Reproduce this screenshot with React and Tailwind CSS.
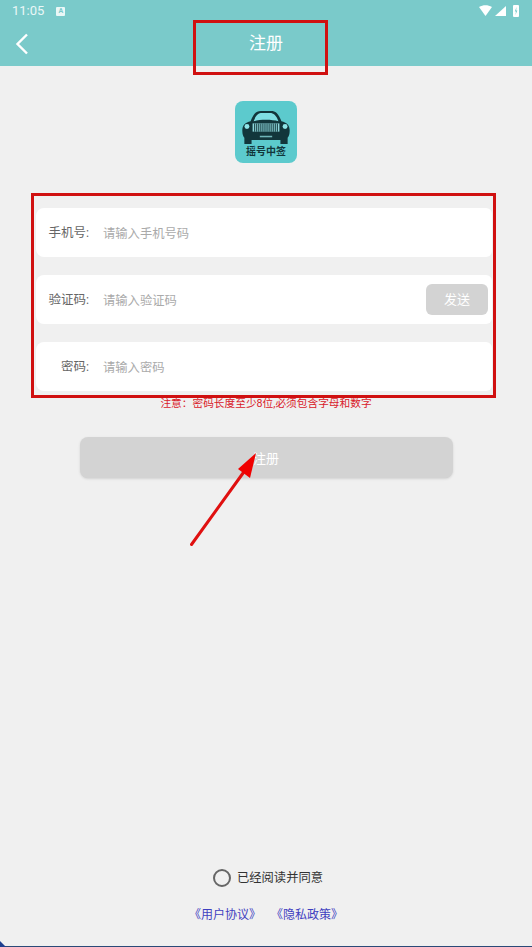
import React from 'react';

const cjk = "font-['Roboto','Noto_Sans_CJK_SC',sans-serif]";

const Row = ({ label, placeholder, children }) => (
    <div className="flex h-[49px] items-center rounded-l-lg rounded-r-md bg-white pr-1">
        <span className="mt-[2px] w-[53px] text-right text-[12.5px] text-[#666666]">{label}</span>
        <span className="mt-[3px] ml-[14px] flex-1 text-[12.3px] text-[#aaaaaa]">{placeholder}</span>
        {children}
    </div>
);

const Logo = () => (
    <div className="flex h-[62px] w-[62px] flex-col items-center rounded-lg bg-[#5ccacd] pt-[9px]">
        <svg width="50" height="34" viewBox="0 0 48 33">
            <path d="M9 11 C12 3 15 1 19 1 H29 C33 1 36 3 39 11 C44 12 47 15 47 20 C47 24 46 26 45 27 V33 H38 V29 H10 V33 H3 V27 C2 26 1 24 1 20 C1 15 4 12 9 11 Z" fill="#12363b" />
            <path d="M12 11 C14 5 17 3 20 3 H28 C31 3 34 5 36 11 C30 9 18 9 12 11 Z" fill="#7fdfe3" />
            <circle cx="5.5" cy="16" r="2.4" fill="#8fe5e8" />
            <circle cx="42.5" cy="16" r="2.4" fill="#8fe5e8" />
            <rect x="11" y="13" width="26" height="8" fill="#8fd8dc" />
            <path d="M13 13 V21 M15 13 V21 M17 13 V21 M19 13 V21 M21 13 V21 M23 13 V21 M25 13 V21 M27 13 V21 M29 13 V21 M31 13 V21 M33 13 V21 M35 13 V21" stroke="#12363b" strokeWidth="1" />
            <rect x="18" y="25" width="12" height="1.5" fill="#6fb5b8" />
        </svg>
        <span className="mt-[1px] text-[10px] leading-[14px] font-bold text-[#12363b]">摇号中签</span>
    </div>
);

const App = () => {
    return (
        <div className={`relative flex h-[947px] w-[532px] flex-col overflow-hidden bg-[#f0f0f0] ${cjk}`}>
            <header className="h-[66px] bg-[#7acaca] text-white">
                <div className="flex h-[22px] items-center pr-[13px] pl-3">
                    <span className="text-[13px] text-[#eaf7f7]">11:05</span>
                    <span className="ml-[12px] flex h-[9px] w-[9px] items-center justify-center rounded-[1px] bg-[#eaf7f7] text-[7px] leading-none font-bold text-[#7acaca]">A</span>
                    <svg className="ml-auto" width="40" height="14" viewBox="0 0 40 14">
                        <path d="M0 3 C4 0.5 9 0.5 13 3 L6.5 12 Z" fill="#ffffff" />
                        <path d="M27 2 V12 H16 Z" fill="#ffffff" />
                        <rect x="34" y="1" width="6" height="12" rx="1" fill="#ffffff" />
                        <path d="M37.5 3 L35.8 7.5 H37 L36.4 11 L38.4 6.5 H37.2 Z" fill="#7acaca" />
                    </svg>
                </div>
                <div className="relative flex h-[44px] items-center justify-center">
                    <svg className="absolute top-[11px] left-[15px]" width="14" height="22" viewBox="0 0 14 22" fill="none">
                        <path d="M12 1.5 L2.5 11 L12 20.5" stroke="#ffffff" strokeWidth="2.4" />
                    </svg>
                    <span className="text-[17px]">注册</span>
                </div>
            </header>

            <div className="mt-[35px] flex justify-center">
                <Logo />
            </div>

            <div className="mt-[45px] ml-[36px] flex w-[456px] flex-col gap-[18px]">
                <Row label="手机号:" placeholder="请输入手机号码" />
                <Row label="验证码:" placeholder="请输入验证码">
                    <span className="flex h-[31px] w-[62px] items-center justify-center rounded-md bg-[#d3d3d3] pt-[1px] text-[13px] text-white">发送</span>
                </Row>
                <Row label="密码:" placeholder="请输入密码" />
            </div>

            <p className="mt-[5px] text-center text-[10.7px] leading-[15px] text-[#d9202a]">{'注意\uFF1A密码长度至少8位,必须包含字母和数字'}</p>

            <button className="mx-auto mt-[26px] flex h-[41px] w-[373px] items-center justify-center rounded-lg bg-[#d3d3d3] pt-[2px] text-[13px] text-white shadow-sm">
                注册
            </button>

            <div className="mt-auto flex items-center justify-center gap-[6px] pl-[4px]">
                <span className="h-[18px] w-[18px] rounded-full border-2 border-[#666666]" />
                <span className="text-[12.3px] text-[#333333]">已经阅读并同意</span>
            </div>
            <div className="mt-[20px] mb-[23px] flex justify-center gap-[10px] text-xs text-[#3f3fc0]">
                <span>《用户协议》</span>
                <span>《隐私政策》</span>
            </div>
            <div className="h-[1px] bg-[#2b4a78]" />

            {/* annotations on top of the screenshot */}
            <div className="absolute top-[20px] left-[193px] h-[55px] w-[135px] border-[3px] border-[#d01010]" />
            <div className="absolute top-[193px] left-[31px] h-[205px] w-[465px] border-[3px] border-[#d01010]" />
            <svg className="absolute top-[445px] left-[180px]" width="90" height="110" viewBox="0 0 90 110">
                <path d="M11.5 99.5 L66 24" stroke="#e01010" strokeWidth="3" strokeLinecap="round" />
                <path d="M76 8 L58 24 L70 33 Z" fill="#f00000" />
            </svg>
            <svg className="absolute bottom-0 left-0" width="6" height="6" viewBox="0 0 6 6">
                <path d="M0 0 L6 6 H0 Z" fill="#1f3f8f" />
            </svg>
        </div>
    );
};

export default App;
